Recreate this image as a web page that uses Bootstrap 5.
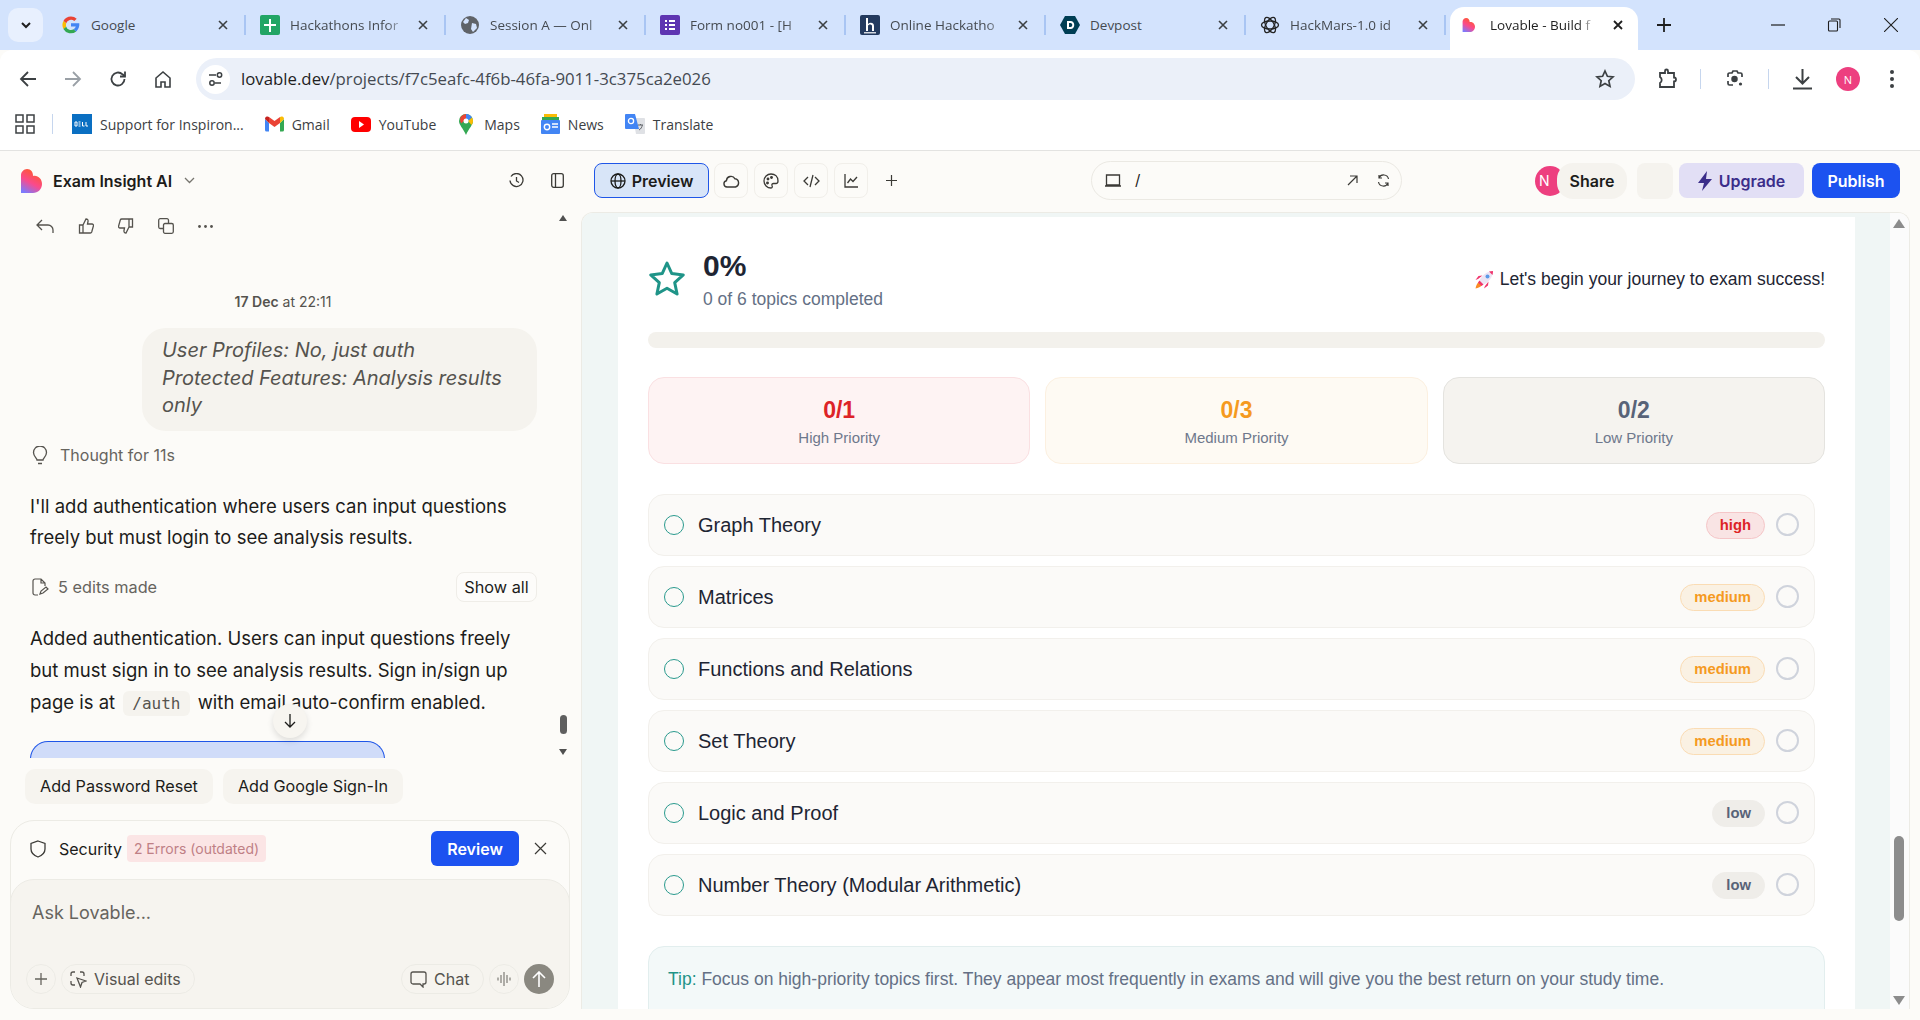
<!DOCTYPE html>
<html lang="en">
<head>
<meta charset="UTF-8">
<title>Lovable - Exam Insight AI</title>
<link href="https://cdn.jsdelivr.net/npm/bootstrap@5.3.0/dist/css/bootstrap.min.css" rel="stylesheet">
<style>
  html, body { height: 1020px; overflow: hidden; }
  body { background: #fcfbf8; font-family: "Inter", sans-serif; color: #1c1c1a; }
  svg { display: block; flex: none; }

  /* browser chrome */
  .tabstrip { height: 50px; background: #d3e3fd; padding-left: 8px; font-family: "Open Sans", sans-serif; }
  .tabsearch { width: 35px; height: 34px; margin-top: 8px; margin-right: 3px; background: #e8f0fe; border-radius: 10px; }
  .brtab-sep { width: 200px; height: 50px; padding: 0 17px 0 14px; gap: 10px; font-size: 13.5px; color: #454a50; position: relative; }
  .brtab-sep::after { content: ""; position: absolute; right: 0; top: 15px; height: 20px; width: 2px; background: #a9c5f3; }
  .brtab-name { flex: 1; min-width: 0; white-space: nowrap; overflow: hidden; }
  .brtab-fade { -webkit-mask-image: linear-gradient(to right, #000 82%, transparent 100%); mask-image: linear-gradient(to right, #000 82%, transparent 100%); }
  .brtab-active { width: 188px; height: 43px; margin: 7px 0 0 4px; padding: 0 14px 7px 12px; gap: 15px; background: #fff; border-radius: 14px 14px 0 0; font-size: 13.5px; color: #1f1f1f; }
  .winctl { width: 56px; }
  .toolbar { height: 50px; background: #fff; padding: 8px 0 0 0; border-radius: 12px 12px 0 0; }
  .tb-ico { width: 45px; height: 42px; }
  .addr { width: 1439px; height: 42px; background: #ebf0f9; border-radius: 21px; margin-left: 11px; padding-left: 5px; font-family: "Open Sans", sans-serif; font-size: 16.8px; color: #444a52; }
  .addr b { font-weight: 400; color: #1f1f1f; }
  .addr-site { width: 29px; height: 29px; background: #fff; border-radius: 50%; margin-right: 11px; }
  .bm-bar { height: 51px; background: #fff; border-bottom: 1px solid #e3e3e1; font-family: "Open Sans", sans-serif; font-size: 14px; color: #3c4043; padding: 0 0 2px 15px; }
  .bm-div { width: 1px; height: 20px; background: #c6d6ee; margin: 0 19px 0 17px; }
  .bm { gap: 8px; margin-right: 21px; white-space: nowrap; }

  /* lovable top row */
  .apphead { height: 61px; font-size: 16px; padding-bottom: 2px; }
  .headleft { width: 581px; padding-left: 20px; }
  .appname { font-weight: 600; font-size: 16px; margin-left: 11px; color: #1c1c1a; }
  .pre-btn { width: 115px; height: 35px; background: #d8e5f8; border: 1px solid #1f56e8; border-radius: 8px; font-weight: 600; font-size: 16px; gap: 6px; margin: 0 5px 0 13px; }
  .head-ico { width: 34px; height: 35px; border: 1px solid #f1efea; border-radius: 8px; margin-right: 6px; }
  .urlbox { width: 311px; height: 39px; border: 1px solid #ebe9e3; border-radius: 20px; padding: 0 11px 0 13px; margin-left: 194px; font-size: 15px; }
  .avatar-n { width: 30px; height: 30px; border-radius: 50%; background: #ed3f7f; color: #fff; font-size: 14px; padding-left: 4px; margin-left: 133px; margin-right: -8px; }
  .share-pill { width: 70px; height: 36px; border-radius: 16px; background: #f5f3ee; font-weight: 600; position: relative; }
  .blank-btn { width: 36px; height: 36px; background: #f5f3ee; border-radius: 8px; margin: 0 6px 0 10px; }
  .upg-btn { width: 125px; height: 35px; background: #e2dff5; color: #3b2d8a; border-radius: 8px; font-weight: 600; gap: 7px; }
  .pub-btn { width: 88px; height: 35px; background: #1c52f0; color: #fff; border-radius: 8px; font-weight: 600; margin-left: 8px; }

  /* chat column */
  .chatcol { width: 581px; height: 808px; }
  .chatscroll { height: 546px; position: relative; overflow: hidden; }
  .chatflow { width: 552px; }
  .act-row { height: 28px; padding-left: 36px; gap: 24px; }
  .stamp { margin-top: 52px; height: 20px; line-height: 20px; text-align: center; font-size: 14px; color: #55534e; padding-left: 14px; }
  .stamp b { font-weight: 600; }
  .bubble { width: 395px; height: 103px; margin: 16px 0 0 142px; padding: 9px 20px; background: #f5f3ee; border-radius: 24px; font-style: italic; font-size: 20px; line-height: 27.6px; color: #55534e; }
  .thought { height: 24px; margin-top: 12px; padding-left: 32px; gap: 12px; font-size: 16px; color: #66645e; }
  .msg { margin: 0; padding-left: 30px; width: 537px; font-size: 18.5px; }
  .edits { height: 30px; margin: 19px 0 0 32px; width: 505px; font-size: 16.3px; color: #66645e; gap: 9px; }
  .showall { margin-left: auto; width: 81px; height: 30px; border: 1px solid #efede8; border-radius: 8px; color: #1c1c1a; background: #fdfcfa; }
  .codepill { font-family: "DejaVu Sans Mono", monospace; font-size: 16px; background: #f5f3ee; color: #55534e; padding: 3px 9px; border-radius: 6px; margin: 0 3px; }
  .bluecard { width: 355px; height: 18px; margin: 21px 0 0 30px; background: #d0dcf9; border: 1px solid #1f56e8; border-bottom: 0; border-radius: 24px 24px 0 0; }
  .jumpdown { position: absolute; left: 273px; top: 492px; width: 34px; height: 34px; background: #f7f5f0; border-radius: 50%; box-shadow: 0 3px 6px rgba(0,0,0,.12); }
  .sbar-left { position: absolute; left: 556px; top: 0; width: 14px; height: 546px; }
  .sb-thumb-l { position: absolute; left: 4px; top: 503px; width: 7px; height: 19px; background: #5f5f5f; border-radius: 4px; }
  .sb-up-l, .sb-down-l { position: absolute; left: 3px; width: 0; height: 0; border-left: 4px solid transparent; border-right: 4px solid transparent; }
  .sb-up-l { top: 3px; border-bottom: 6px solid #505050; }
  .sb-down-l { top: 537px; border-top: 6px solid #505050; }
  .chipline { margin: 11px 0 0 25px; gap: 10px; }
  .chipbtn { height: 35px; padding: 0 15px; background: #f6f4ef; border-radius: 10px; font-size: 16.2px; }
  .secbox { width: 560px; height: 189px; margin: 16px 0 0 10px; border: 1px solid #ecebe5; border-radius: 24px; overflow: hidden; }
  .sechead { height: 58px; padding: 0 16px 3px 19px; }
  .sec-errors { height: 27px; margin-left: 5px; padding: 0 7px; background: #fbe5e5; color: #bf8085; border-radius: 4px; font-size: 14px; }
  .rev-btn { width: 88px; height: 35px; background: #1c52f0; color: #fff; border-radius: 6px; font-weight: 600; font-size: 16px; margin-left: auto; }
  .inputbox { height: 131px; margin: 0 -1px; background: #f6f4ef; border: 1px solid #ecebe5; border-radius: 24px; padding: 19px 15px 0 15px; }
  .ask { font-size: 18px; color: #66645e; padding-left: 6px; height: 28px; line-height: 28px; }
  .in-tools { margin-top: 37px; gap: 5px; height: 30px; }
  .round-ico { width: 30px; height: 30px; border: 1px solid #ecebe5; border-radius: 50%; }
  .pill-ico { height: 30px; border: 1px solid #ecebe5; border-radius: 15px; gap: 7px; font-size: 16px; color: #55534e; }
  .send-ico { width: 30px; height: 30px; background: #8a8880; border-radius: 50%; }

  /* preview */
  .previewpane { width: 1329px; height: 797px; border: 1px solid #ecebe5; border-bottom: 0; border-radius: 12px 12px 0 0; overflow: hidden; font-family: "Liberation Sans", sans-serif; }
  .preview-bg { width: 1309px; padding: 4px 35px 0 36px; background: #f0f6f5; }
  .sheet { background: #fff; height: 800px; padding: 31px 30px 0 30px; }
  .pct { font-size: 30px; font-weight: 700; line-height: 36px; color: #1e2533; }
  .pct-sub { font-size: 17.5px; line-height: 27px; color: #647085; margin-top: 2px; }
  .journey { font-size: 17.5px; color: #1e2533; gap: 6px; margin-top: -2px; }
  .track { height: 16px; background: #f3f1ec; border-radius: 8px; margin-top: 19px; }
  .statrow { margin-top: 29px; gap: 15px; }
  .statbox { flex: 1; height: 87px; border-radius: 16px; border: 1px solid; text-align: center; padding-top: 18px; }
  .statbox b { display: block; font-size: 23px; line-height: 28px; }
  .statbox span { display: block; font-size: 15px; line-height: 20px; margin-top: 4px; color: #6e788c; }
  .st-high { background: #fef3f3; border-color: #fae0e2; }
  .st-high b { color: #dd2327; }
  .st-med { background: #fefaf3; border-color: #fcf0e0; }
  .st-med b { color: #f59a1f; }
  .st-low { background: #f5f3ef; border-color: #e4e3df; }
  .st-low b { color: #586378; }
  .topics { margin-top: 30px; margin-right: 10px; gap: 10px; }
  .topicrow { height: 62px; background: #fbfaf8; border: 1px solid #f2f0ec; border-radius: 16px; padding: 0 15px; font-size: 20px; color: #1e2533; }
  .ring-teal { width: 20px; height: 20px; border: 1.5px solid #2a9a8e; border-radius: 50%; margin-right: 14px; }
  .ring-gray { width: 23px; height: 23px; border: 2px solid #cfd3dc; border-radius: 50%; margin-left: 11px; margin-top: -1px; }
  .prio { height: 27px; padding: 0 13px; border-radius: 14px; border: 1px solid; font-size: 14.8px; font-weight: 700; margin-left: auto; }
  .pr-high { background: #f9e4e4; border-color: #f5c6c8; color: #dd2327; }
  .pr-med { background: #faf1e3; border-color: #fadcb4; color: #f59a1f; }
  .pr-low { background: #efede9; border-color: #efede9; color: #586378; }
  .tipbox { margin-top: 30px; height: 90px; background: #f3f9f9; border: 1px solid #e2eeee; border-radius: 16px; padding: 20px 19px; font-size: 17.5px; line-height: 24px; color: #647085; white-space: nowrap; }
  .tipbox em { font-style: normal; color: #1f9488; }
  .sbar-right { width: 19px; background: #fbfbfb; position: relative; }
  .sb-thumb-r { position: absolute; left: 4px; top: 623px; width: 10px; height: 85px; background: #8c8c8c; border-radius: 5px; }
  .sb-up-r, .sb-down-r { position: absolute; left: 3px; width: 0; height: 0; border-left: 6px solid transparent; border-right: 6px solid transparent; }
  .sb-up-r { top: 6px; border-bottom: 9px solid #8c8c8c; }
  .sb-down-r { top: 783px; border-top: 9px solid #8c8c8c; }
</style>
</head>
<body>

<!-- chrome tabs -->
<div class="tabstrip d-flex">
  <div class="tabsearch d-flex align-items-center justify-content-center">
    <svg width="12" height="12" viewBox="0 0 12 12"><path d="M2 4l4 4 4-4" fill="none" stroke="#1f1f1f" stroke-width="2"/></svg>
  </div>
  <div class="brtab-sep d-flex align-items-center" style="padding-left:15px">
    <svg width="20" height="20" viewBox="0 0 20 20"><path d="M10 1.500a8.500 8.500 0 0 1 5.700 2.200l-2.400 2.400A5 5 0 0 0 5.200 8.300L2.400 6.100A8.500 8.500 0 0 1 10 1.500z" fill="#ea4335"/><path d="M2.400 6.100l2.800 2.200a5 5 0 0 0 0 3.400l-2.800 2.200a8.500 8.500 0 0 1 0-7.800z" fill="#fbbc05"/><path d="M5.200 11.700a5 5 0 0 0 7.400 2.600l2.600 2.100a8.500 8.500 0 0 1-12.800-2.500z" fill="#34a853"/><path d="M18.300 8.300H10v3.300h4.800a4 4 0 0 1-2.200 2.700l2.600 2.100c2.200-2 3.500-5 3.100-8.100z" fill="#4285f4"/></svg>
    <span class="brtab-name">Google</span>
    <svg width="12" height="12" viewBox="0 0 12 12"><path d="M2 2l8 8M10 2l-8 8" stroke="#3c4043" stroke-width="1.600"/></svg>
  </div>
  <div class="brtab-sep d-flex align-items-center">
    <svg width="20" height="20" viewBox="0 0 20 20"><rect width="20" height="20" rx="2" fill="#22a565"/><path d="M9 4h2v5h5v2h-5v6H9v-6H4V9h5z" fill="#fff"/></svg>
    <span class="brtab-name brtab-fade">Hackathons Infor</span>
    <svg width="12" height="12" viewBox="0 0 12 12"><path d="M2 2l8 8M10 2l-8 8" stroke="#3c4043" stroke-width="1.600"/></svg>
  </div>
  <div class="brtab-sep d-flex align-items-center">
    <svg width="20" height="20" viewBox="0 0 20 20"><circle cx="10" cy="10" r="9" fill="#5f6368"/><path d="M6 3l3 2-1 3-3 1-2-2zM12 8l4 1 1 4-4 4-2-3z" fill="#d3e3fd"/></svg>
    <span class="brtab-name brtab-fade">Session A — Onl</span>
    <svg width="12" height="12" viewBox="0 0 12 12"><path d="M2 2l8 8M10 2l-8 8" stroke="#3c4043" stroke-width="1.600"/></svg>
  </div>
  <div class="brtab-sep d-flex align-items-center">
    <svg width="20" height="20" viewBox="0 0 20 20"><rect width="20" height="20" rx="2" fill="#5e35b1"/><path d="M5 5h2v2H5zM9 5h6v2H9zM5 9h2v2H5zM9 9h6v2H9zM5 13h2v2H5zM9 13h6v2H9z" fill="#fff"/></svg>
    <span class="brtab-name brtab-fade">Form no001 - [H</span>
    <svg width="12" height="12" viewBox="0 0 12 12"><path d="M2 2l8 8M10 2l-8 8" stroke="#3c4043" stroke-width="1.600"/></svg>
  </div>
  <div class="brtab-sep d-flex align-items-center">
    <svg width="20" height="20" viewBox="0 0 20 20"><rect width="20" height="20" rx="2" fill="#233a5e"/><path d="M6 3h2v6c2-2 6-1.500 6 2v5h-2v-5c0-2-4-2-4 0v5H6z" fill="#fff"/><rect x="4" y="17.200" width="12" height="1.200" fill="#fff"/></svg>
    <span class="brtab-name brtab-fade">Online Hackatho</span>
    <svg width="12" height="12" viewBox="0 0 12 12"><path d="M2 2l8 8M10 2l-8 8" stroke="#3c4043" stroke-width="1.600"/></svg>
  </div>
  <div class="brtab-sep d-flex align-items-center">
    <svg width="20" height="20" viewBox="0 0 20 20"><path d="M5 1h10l5 9-5 9H5l-5-9z" fill="#003e54"/><path d="M7 6h3.500c5 0 5 8 0 8H7zM9 8v4h1.500c2.400 0 2.400-4 0-4z" fill="#fff" fill-rule="evenodd"/></svg>
    <span class="brtab-name">Devpost</span>
    <svg width="12" height="12" viewBox="0 0 12 12"><path d="M2 2l8 8M10 2l-8 8" stroke="#3c4043" stroke-width="1.600"/></svg>
  </div>
  <div class="brtab-sep d-flex align-items-center">
    <svg width="20" height="20" viewBox="0 0 20 20" fill="none" stroke="#222" stroke-width="1.300"><ellipse cx="10" cy="10" rx="8.500" ry="4"/><ellipse cx="10" cy="10" rx="8.500" ry="4" transform="rotate(60 10 10)"/><ellipse cx="10" cy="10" rx="8.500" ry="4" transform="rotate(120 10 10)"/></svg>
    <span class="brtab-name brtab-fade">HackMars-1.0 id</span>
    <svg width="12" height="12" viewBox="0 0 12 12"><path d="M2 2l8 8M10 2l-8 8" stroke="#3c4043" stroke-width="1.600"/></svg>
  </div>
  <div class="brtab-active d-flex align-items-center">
    <svg width="13" height="16" viewBox="0 0 22 24"><defs><linearGradient id="lg1" x1=".7" y1="0" x2=".2" y2="1"><stop offset="0" stop-color="#ff5a1f"/><stop offset=".55" stop-color="#fa4a8c"/><stop offset="1" stop-color="#7a7bff"/></linearGradient></defs><path d="M7 0c4 0 6 3 6 7 5-1 9 3 9 8 0 5-4 9-9 9H1V6c0-3 3-6 6-6z" fill="url(#lg1)"/></svg>
    <span class="brtab-name brtab-fade">Lovable - Build f</span>
    <svg width="12" height="12" viewBox="0 0 12 12"><path d="M2 2l8 8M10 2l-8 8" stroke="#1f1f1f" stroke-width="1.800"/></svg>
  </div>
  <div class="d-flex align-items-center" style="margin-left:19px">
    <svg width="14" height="14" viewBox="0 0 14 14"><path d="M7 0v14M0 7h14" stroke="#1f1f1f" stroke-width="1.800"/></svg>
  </div>
  <div class="d-flex ms-auto">
    <div class="winctl d-flex align-items-center justify-content-center"><svg width="14" height="2" viewBox="0 0 14 2"><path d="M0 1h14" stroke="#1f1f1f" stroke-width="1.200"/></svg></div>
    <div class="winctl d-flex align-items-center justify-content-center"><svg width="14" height="14" viewBox="0 0 14 14" fill="none" stroke="#1f1f1f" stroke-width="1.100"><rect x="1.500" y="3" width="9" height="10" rx="1"/><path d="M4 1h8a1 1 0 0 1 1 1v8"/></svg></div>
    <div class="winctl d-flex align-items-center justify-content-center" style="width:58px"><svg width="14" height="14" viewBox="0 0 14 14"><path d="M0 0l14 14M14 0L0 14" stroke="#1f1f1f" stroke-width="1.100"/></svg></div>
  </div>
</div>

<!-- address bar -->
<div class="toolbar d-flex">
  <div class="tb-ico d-flex align-items-center justify-content-center" style="margin-left:5px"><svg width="18" height="18" viewBox="0 0 18 18" fill="none" stroke="#3c4043" stroke-width="1.800"><path d="M17 9H2M9 2L2 9l7 7"/></svg></div>
  <div class="tb-ico d-flex align-items-center justify-content-center"><svg width="18" height="18" viewBox="0 0 18 18" fill="none" stroke="#9aa0a6" stroke-width="1.800"><path d="M1 9h15M9 2l7 7-7 7"/></svg></div>
  <div class="tb-ico d-flex align-items-center justify-content-center"><svg width="18" height="18" viewBox="0 0 18 18" fill="none" stroke="#3c4043" stroke-width="1.800"><path d="M15.500 9a6.500 6.500 0 1 1-2-4.700L16 6.500"/><path d="M16 1.500v5h-5" /></svg></div>
  <div class="tb-ico d-flex align-items-center justify-content-center"><svg width="18" height="18" viewBox="0 0 18 18" fill="none" stroke="#3c4043" stroke-width="1.600"><path d="M2 8l7-6 7 6v9h-5v-5H7v5H2z"/></svg></div>
  <div class="addr d-flex align-items-center">
    <div class="addr-site d-flex align-items-center justify-content-center"><svg width="16" height="16" viewBox="0 0 16 16" fill="none" stroke="#3c4043" stroke-width="1.500"><path d="M1 4h7M13 12H7"/><circle cx="11.500" cy="4" r="2.200"/><circle cx="4" cy="12" r="2.200"/></svg></div>
    <span><b>lovable.dev</b>/projects/f7c5eafc-4f6b-46fa-9011-3c375ca2e026</span>
    <svg class="ms-auto" style="margin-right:20px" width="20" height="20" viewBox="0 0 20 20" fill="none" stroke="#3c4043" stroke-width="1.700"><path d="M10 2l2.400 5.300 5.600.6-4.200 3.800 1.200 5.700L10 14.500l-5 2.900 1.200-5.700L2 7.900l5.600-.6z"/></svg>
  </div>
  <!-- puzzle piece: notch on the left, knob on top and right -->
  <div class="d-flex align-items-center" style="margin-left:23px"><svg width="20" height="22" viewBox="0 0 20 22" fill="none" stroke="#3c4043" stroke-width="1.800"><path d="M2 5h5V3a1.500 1.500 0 0 1 3 0v2h6v4.500a2 2 0 0 1 0 4V19H2v-4a3.500 3.500 0 0 0 0-6z"/></svg></div>
  <div style="width:1px;height:20px;background:#c6d6ee;margin:11px 0 0 22px"></div>
  <div class="d-flex align-items-center" style="margin-left:24px"><svg width="20" height="22" viewBox="0 0 20 22" fill="none" stroke="#3c4043" stroke-width="1.700"><path d="M3 9V6.500A1.500 1.500 0 0 1 4.500 5H7l1-2h4l1 2h2.500A1.500 1.500 0 0 1 17 6.500V9M3 13v2.500A1.500 1.500 0 0 0 4.500 17H8"/><circle cx="9.500" cy="11" r="2.400" fill="#3c4043"/><circle cx="15.500" cy="16" r="1.600" fill="#3c4043" stroke="none"/></svg></div>
  <div style="width:1px;height:20px;background:#c6d6ee;margin:11px 0 0 23px"></div>
  <div class="d-flex align-items-center" style="margin-left:23px"><svg width="21" height="22" viewBox="0 0 21 22" fill="none" stroke="#3c4043" stroke-width="2"><path d="M10.500 1v14M4 9l6.500 6.500L17 9M1 20.500h19"/></svg></div>
  <div class="d-flex align-items-center justify-content-center" style="width:24px;height:24px;margin:9px 0 0 23px;border-radius:50%;background:#ed3f7f;color:#fff;font:11px 'Open Sans',sans-serif">N</div>
  <div class="d-flex align-items-center" style="margin-left:30px"><svg width="4" height="18" viewBox="0 0 4 18" fill="#3c4043"><circle cx="2" cy="2" r="2"/><circle cx="2" cy="9" r="2"/><circle cx="2" cy="16" r="2"/></svg></div>
</div>

<!-- bookmarks -->
<div class="bm-bar d-flex align-items-center">
  <svg width="20" height="20" viewBox="0 0 20 20" fill="none" stroke="#3c4043" stroke-width="1.500"><rect x="1" y="1" width="7" height="7"/><rect x="12" y="1" width="7" height="7"/><rect x="1" y="12" width="7" height="7"/><rect x="12" y="12" width="7" height="7"/></svg>
  <div class="bm-div"></div>
  <div class="bm d-flex align-items-center">
    <svg width="20" height="20" viewBox="0 0 20 20"><rect width="20" height="20" fill="#0a6fc2"/><path d="M3 12V8h2v4zM6.500 8h2M6.500 10h2M6.500 12h2M10.500 8v4h2M14 8v4h2" fill="none" stroke="#fff" stroke-width="1"/></svg>
    <span>Support for Inspiron...</span>
  </div>
  <div class="bm d-flex align-items-center">
    <svg width="19" height="16" viewBox="0 0 19 16"><path d="M0 3v11a1.500 1.500 0 0 0 1.500 1.500H4V7z" fill="#4285f4"/><path d="M19 3v11a1.500 1.500 0 0 1-1.500 1.500H15V7z" fill="#34a853"/><path d="M4 7l5.500 4L15 7V1l-5.500 4L4 1z" fill="#ea4335"/><path d="M0 3l4 4V1L2.500.5C1 0 0 1.500 0 3z" fill="#c5221f"/><path d="M19 3l-4 4V1l1.500-.5C18 0 19 1.500 19 3z" fill="#fbbc04"/></svg>
    <span>Gmail</span>
  </div>
  <div class="bm d-flex align-items-center">
    <svg width="20" height="15" viewBox="0 0 20 15"><rect width="20" height="15" rx="4" fill="#f00"/><path d="M8 4l5 3.500L8 11z" fill="#fff"/></svg>
    <span>YouTube</span>
  </div>
  <div class="bm d-flex align-items-center" style="margin-left:2px">
    <svg width="14" height="21" viewBox="0 0 14 21"><path d="M7 0a7 7 0 0 1 7 7c0 4-4 7-7 14C4 14 0 11 0 7a7 7 0 0 1 7-7z" fill="#34a853"/><path d="M2 2.500A7 7 0 0 1 7 0v5L2.200 9.600A7 7 0 0 1 2 2.500z" fill="#ea4335"/><path d="M7 0a7 7 0 0 1 6 3.500L9 7 7 5z" fill="#4285f4"/><path d="M13 3.500A7 7 0 0 1 14 7c0 1.500-.5 2.500-1.500 4L9 7z" fill="#fbbc04"/><circle cx="7" cy="7" r="2.500" fill="#fff"/></svg>
    <span style="margin-left:3px">Maps</span>
  </div>
  <div class="bm d-flex align-items-center">
    <svg width="19" height="20" viewBox="0 0 19 20"><path d="M3 0h13v6H3z" fill="#fbbc04"/><path d="M1 3h17v6H1z" fill="#34a853"/><rect y="6" width="19" height="14" rx="1" fill="#4285f4"/><path d="M11 10h6M11 13h6" stroke="#fff" stroke-width="1.300"/><circle cx="6" cy="13" r="2.700" fill="none" stroke="#fff" stroke-width="1.400"/></svg>
    <span>News</span>
  </div>
  <div class="bm d-flex align-items-center">
    <svg width="20" height="20" viewBox="0 0 20 20"><path d="M8 4h11a1 1 0 0 1 1 1v14a1 1 0 0 1-1 1h-8z" fill="#dfe1e5"/><path d="M1 0h9l4 15H1a1 1 0 0 1-1-1V1a1 1 0 0 1 1-1z" fill="#4285f4"/><circle cx="6" cy="7" r="2.600" fill="none" stroke="#fff" stroke-width="1.300"/><path d="M13 11h5M15.500 10v1M14 16c2-1 3-3 3.300-5" stroke="#5f6368" stroke-width="1" fill="none"/></svg>
    <span>Translate</span>
  </div>
</div>

<!-- lovable header -->
<div class="apphead d-flex align-items-center">
  <div class="headleft d-flex align-items-center">
    <svg width="22" height="24" viewBox="0 0 22 24"><defs><linearGradient id="lg2" x1=".7" y1="0" x2=".2" y2="1"><stop offset="0" stop-color="#ff5a1f"/><stop offset=".55" stop-color="#fa4a8c"/><stop offset="1" stop-color="#7a7bff"/></linearGradient></defs><path d="M7 0c4 0 6 3 6 7 5-1 9 3 9 8 0 5-4 9-9 9H1V6c0-3 3-6 6-6z" fill="url(#lg2)"/></svg>
    <span class="appname">Exam Insight AI</span>
    <svg style="margin-left:12px" width="11" height="7" viewBox="0 0 11 7" fill="none" stroke="#77756f" stroke-width="1.300"><path d="M1 1l4.500 4.500L10 1"/></svg>
    <svg style="margin-left:314px" width="15" height="15" viewBox="0 0 15 15" fill="none" stroke="#3b3a36" stroke-width="1.300"><path d="M2 3.500A6.500 6.500 0 1 1 1 7.500" stroke-dasharray="30 0"/><path d="M7.500 4v4l2.500 1.500"/></svg>
    <svg style="margin-left:27px" width="13" height="15" viewBox="0 0 13 15" fill="none" stroke="#3b3a36" stroke-width="1.300"><rect x=".7" y=".7" width="11.600" height="13.600" rx="2"/><path d="M4.500 1v13"/></svg>
  </div>
  <div class="pre-btn d-flex align-items-center justify-content-center">
    <svg width="16" height="16" viewBox="0 0 16 16" fill="none" stroke="#1c1c1a" stroke-width="1.300"><circle cx="8" cy="8" r="7"/><ellipse cx="8" cy="8" rx="3" ry="7"/><path d="M1 8h14"/></svg>
    <span>Preview</span>
  </div>
  <div class="head-ico d-flex align-items-center justify-content-center"><svg width="17" height="14" viewBox="0 0 17 14" fill="none" stroke="#3b3a36" stroke-width="1.400"><path d="M4 13a3.200 3.200 0 0 1-.6-6.300A4.600 4.600 0 0 1 12 4.800 4.200 4.200 0 0 1 12.500 13z"/></svg></div>
  <div class="head-ico d-flex align-items-center justify-content-center"><svg width="16" height="16" viewBox="0 0 16 16" fill="none" stroke="#3b3a36" stroke-width="1.300"><path d="M8 1a7 7 0 1 0 0 14c1.500 0 1.500-1.500 1-2.500-.5-1.200.5-2 1.500-2h2.500c1.500 0 2-1.500 2-2.500C15 3.500 12 1 8 1z"/><circle cx="5" cy="6" r=".8" fill="#3b3a36"/><circle cx="8.500" cy="4.500" r=".8" fill="#3b3a36"/><circle cx="4.500" cy="10" r=".8" fill="#3b3a36"/></svg></div>
  <div class="head-ico d-flex align-items-center justify-content-center"><svg width="17" height="14" viewBox="0 0 17 14" fill="none" stroke="#3b3a36" stroke-width="1.300"><path d="M5 3L1 7l4 4M12 3l4 4-4 4M10 1L7 13"/></svg></div>
  <div class="head-ico d-flex align-items-center justify-content-center"><svg width="15" height="15" viewBox="0 0 15 15" fill="none" stroke="#3b3a36" stroke-width="1.300"><path d="M1 1v13h13M3.500 10l3-4 2.500 2.500L13 4"/></svg></div>
  <svg style="margin-left:12px" width="11" height="11" viewBox="0 0 11 11"><path d="M5.500 0v11M0 5.500h11" stroke="#3b3a36" stroke-width="1.200"/></svg>
  <div class="urlbox d-flex align-items-center">
    <svg width="16" height="13" viewBox="0 0 16 13" fill="none" stroke="#3b3a36" stroke-width="1.300"><path d="M1.500 1h13v10h-13zM0 12h16"/></svg>
    <span style="margin-left:14px">/</span>
    <svg class="ms-auto" width="11" height="11" viewBox="0 0 11 11" fill="none" stroke="#3b3a36" stroke-width="1.200"><path d="M1 10l9-9M3 1h7v7"/></svg>
    <svg style="margin-left:19px" width="13" height="13" viewBox="0 0 13 13" fill="none" stroke="#3b3a36" stroke-width="1.200"><path d="M11.500 5A5 5 0 0 0 2 4M1.500 8a5 5 0 0 0 9.500 1M2 1v3h3M11 12V9H8"/></svg>
  </div>
  <div class="avatar-n d-flex align-items-center">N</div>
  <div class="share-pill d-flex align-items-center justify-content-center">Share</div>
  <div class="blank-btn"></div>
  <div class="upg-btn d-flex align-items-center justify-content-center">
    <svg width="14" height="20" viewBox="0 0 14 20"><path d="M9 0L0 12h6l-2 8 10-12H8z" fill="#3b2d8a"/></svg>
    <span>Upgrade</span>
  </div>
  <div class="pub-btn d-flex align-items-center justify-content-center">Publish</div>
</div>

<div class="d-flex">
  <!-- chat -->
  <div class="chatcol">
    <div class="chatscroll">
      <div class="chatflow">
        <div class="act-row d-flex align-items-center">
          <svg width="18" height="15" viewBox="0 0 18 15" fill="none" stroke="#55534e" stroke-width="1.300"><path d="M6 1L1 6l5 5M1 6h11a5 5 0 0 1 5 5v3"/></svg>
          <svg width="16" height="16" viewBox="0 0 16 16" fill="none" stroke="#55534e" stroke-width="1.300"><path d="M5 7l3-6c1.500 0 2.300 1 2 2.500L9.500 6H14a1.500 1.500 0 0 1 1.400 2l-1.700 6a1.500 1.500 0 0 1-1.400 1H5zM5 7H1.500v8H5"/></svg>
          <svg width="16" height="16" viewBox="0 0 16 16" fill="none" stroke="#55534e" stroke-width="1.300"><path d="M11 9l-3 6c-1.500 0-2.300-1-2-2.500l.5-2.500H2A1.500 1.500 0 0 1 .6 8l1.700-6A1.500 1.500 0 0 1 3.700 1H11zM11 9h3.500V1H11"/></svg>
          <svg width="16" height="16" viewBox="0 0 16 16" fill="none" stroke="#55534e" stroke-width="1.300"><rect x="5.500" y="5.500" width="9.800" height="9.800" rx="1.500"/><path d="M10.500 5.500V2.200A1.500 1.500 0 0 0 9 .7H2.200A1.500 1.500 0 0 0 .7 2.200V9a1.500 1.500 0 0 0 1.500 1.500h3.300"/></svg>
          <svg width="15" height="3" viewBox="0 0 15 3" fill="#55534e"><circle cx="1.500" cy="1.500" r="1.400"/><circle cx="7.500" cy="1.500" r="1.400"/><circle cx="13.500" cy="1.500" r="1.400"/></svg>
        </div>
        <div class="stamp"><b>17 Dec</b> at 22:11</div>
        <div class="bubble">User Profiles: No, just auth<br>Protected Features: Analysis results only</div>
        <div class="thought d-flex align-items-center">
          <svg width="16" height="19" viewBox="0 0 16 19" fill="none" stroke="#55534e" stroke-width="1.300"><path d="M5 14c0-2-3.500-3.500-3.500-7.500a6.500 6.500 0 0 1 13 0C14.500 10.500 11 12 11 14zM6 17.500h4"/></svg>
          <span>Thought for 11s</span>
        </div>
        <p class="msg" style="margin-top:24px;line-height:31px">I'll add authentication where users can input questions freely but must login to see analysis results.</p>
        <div class="edits d-flex align-items-center">
          <svg width="17" height="18" viewBox="0 0 17 18" fill="none" stroke="#55534e" stroke-width="1.200"><path d="M6 17H3a2 2 0 0 1-2-2V3a2 2 0 0 1 2-2h6l4 4v3M9 1v4h4M8 16l1-3 5-4 2 2-5 4z"/></svg>
          <span>5 edits made</span>
          <div class="showall d-flex align-items-center justify-content-center">Show all</div>
        </div>
        <p class="msg" style="margin-top:20px;line-height:32px">Added authentication. Users can input questions freely but must sign in to see analysis results. Sign in/sign up page is at <span class="codepill">/auth</span> with email auto-confirm enabled.</p>
        <div class="bluecard"></div>
      </div>
      <div class="jumpdown d-flex align-items-center justify-content-center"><svg width="12" height="14" viewBox="0 0 12 14" fill="none" stroke="#1c1c1a" stroke-width="1.300"><path d="M6 0v13M1 8l5 5 5-5"/></svg></div>
      <div class="sbar-left">
        <div class="sb-up-l"></div>
        <div class="sb-thumb-l"></div>
        <div class="sb-down-l"></div>
      </div>
    </div>
    <div class="chipline d-flex">
      <div class="chipbtn d-flex align-items-center">Add Password Reset</div>
      <div class="chipbtn d-flex align-items-center">Add Google Sign-In</div>
    </div>
    <div class="secbox">
      <div class="sechead d-flex align-items-center">
        <svg width="16" height="18" viewBox="0 0 16 18" fill="none" stroke="#3b3a36" stroke-width="1.300"><path d="M8 1l7 2.500v5.500c0 4-3 6.500-7 8-4-1.500-7-4-7-8V3.500z"/></svg>
        <span style="margin-left:13px;font-size:16px">Security</span>
        <div class="sec-errors d-flex align-items-center">2 Errors (outdated)</div>
        <div class="rev-btn d-flex align-items-center justify-content-center">Review</div>
        <svg style="margin-left:15px;margin-right:6px" width="13" height="13" viewBox="0 0 13 13"><path d="M1 1l11 11M12 1L1 12" stroke="#3b3a36" stroke-width="1.200"/></svg>
      </div>
      <div class="inputbox">
        <div class="ask">Ask Lovable...</div>
        <div class="in-tools d-flex align-items-center">
          <div class="round-ico d-flex align-items-center justify-content-center"><svg width="12" height="12" viewBox="0 0 12 12"><path d="M6 0v12M0 6h12" stroke="#66645e" stroke-width="1.300"/></svg></div>
          <div class="pill-ico d-flex align-items-center px-2" style="width:134px">
            <svg width="17" height="17" viewBox="0 0 17 17" fill="none" stroke="#55534e" stroke-width="1.300"><path d="M1 5V3a2 2 0 0 1 2-2h2M10 1h2a2 2 0 0 1 2 2v2M1 10v2a2 2 0 0 0 2 2h2M7 7l9 3-4 1.500L10.500 16z"/></svg>
            <span>Visual edits</span>
          </div>
          <div class="pill-ico d-flex align-items-center px-2 ms-auto" style="width:83px">
            <svg width="17" height="17" viewBox="0 0 17 17" fill="none" stroke="#55534e" stroke-width="1.300"><path d="M3 1h11a2 2 0 0 1 2 2v8a2 2 0 0 1-2 2h-1v3l-3-3H3a2 2 0 0 1-2-2V3a2 2 0 0 1 2-2z"/></svg>
            <span>Chat</span>
          </div>
          <div class="round-ico d-flex align-items-center justify-content-center"><svg width="14" height="14" viewBox="0 0 14 14" stroke="#66645e" stroke-width="1"><path d="M1 5.500v3M4 3v8M7 0v14M10 3v8M13 5.500v3"/></svg></div>
          <div class="send-ico d-flex align-items-center justify-content-center"><svg width="14" height="16" viewBox="0 0 14 16" fill="none" stroke="#fff" stroke-width="1.600"><path d="M7 16V1M1 7l6-6 6 6"/></svg></div>
        </div>
      </div>
    </div>
  </div>

  <!-- preview -->
  <div class="previewpane d-flex">
    <div class="preview-bg">
      <div class="sheet">
        <div class="d-flex align-items-center">
          <svg style="margin-top:-4px" width="38" height="38" viewBox="0 0 38 38" fill="none" stroke="#1f9488" stroke-width="3" stroke-linejoin="round"><path d="M19 3l4.800 10.600 11.500 1.300-8.600 7.700 2.400 11.400L19 28.300 8.900 34l2.400-11.400-8.600-7.700 11.500-1.300z"/></svg>
          <div style="margin-left:17px">
            <div class="pct">0%</div>
            <div class="pct-sub">0 of 6 topics completed</div>
          </div>
          <div class="journey d-flex align-items-center ms-auto">
            <svg width="19" height="19" viewBox="0 0 19 19"><path d="M4 12c-2 1-3 4-3.500 6.500C3 18 6 17 7 15z" fill="#fb8b24"/><path d="M3 9l-2.500 1 3-4 4-.5zM10 16l-1 2.500 4-3 .5-4z" fill="#f0356d"/><path d="M4.500 10.500C7 5 11.500 1.500 18 1c-.5 6.500-4 11-9.500 13.500z" fill="#ece4f3"/><path d="M14 1.400 18 1c0 1.300-.2 2.700-.5 4z" fill="#f0356d"/><path d="M4.500 10.500l4 4-2 1.500-3.500-3.500z" fill="#f0356d"/><circle cx="12.500" cy="6.500" r="2" fill="#5a9ae8"/></svg>
            <span>Let's begin your journey to exam success!</span>
          </div>
        </div>
        <div class="track"></div>
        <div class="statrow d-flex">
          <div class="statbox st-high"><b>0/1</b><span>High Priority</span></div>
          <div class="statbox st-med"><b>0/3</b><span>Medium Priority</span></div>
          <div class="statbox st-low"><b>0/2</b><span>Low Priority</span></div>
        </div>
        <div class="topics d-flex flex-column">
          <div class="topicrow d-flex align-items-center"><div class="ring-teal"></div>Graph Theory<span class="prio pr-high d-flex align-items-center">high</span><div class="ring-gray"></div></div>
          <div class="topicrow d-flex align-items-center"><div class="ring-teal"></div>Matrices<span class="prio pr-med d-flex align-items-center">medium</span><div class="ring-gray"></div></div>
          <div class="topicrow d-flex align-items-center"><div class="ring-teal"></div>Functions and Relations<span class="prio pr-med d-flex align-items-center">medium</span><div class="ring-gray"></div></div>
          <div class="topicrow d-flex align-items-center"><div class="ring-teal"></div>Set Theory<span class="prio pr-med d-flex align-items-center">medium</span><div class="ring-gray"></div></div>
          <div class="topicrow d-flex align-items-center"><div class="ring-teal"></div>Logic and Proof<span class="prio pr-low d-flex align-items-center">low</span><div class="ring-gray"></div></div>
          <div class="topicrow d-flex align-items-center"><div class="ring-teal"></div>Number Theory (Modular Arithmetic)<span class="prio pr-low d-flex align-items-center">low</span><div class="ring-gray"></div></div>
        </div>
        <div class="tipbox"><em>Tip:</em> Focus on high-priority topics first. They appear most frequently in exams and will give you the best return on your study time.</div>
      </div>
    </div>
    <div class="sbar-right">
      <div class="sb-up-r"></div>
      <div class="sb-thumb-r"></div>
      <div class="sb-down-r"></div>
    </div>
  </div>
</div>

</body>
</html>
